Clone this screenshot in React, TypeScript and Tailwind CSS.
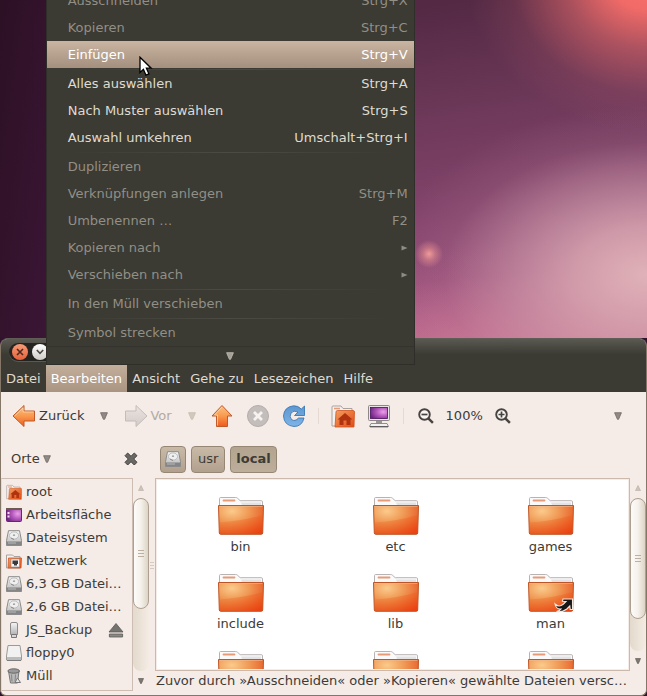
import type { ReactNode } from "react";

type MenuEntry =
  | { kind: "sep" }
  | { kind: "item"; label: string; keys?: string; disabled?: boolean; active?: boolean; submenu?: boolean };

const entries: MenuEntry[] = [
  { kind: "item", label: "Ausschneiden", keys: "Strg+X", disabled: true },
  { kind: "item", label: "Kopieren", keys: "Strg+C", disabled: true },
  { kind: "item", label: "Einfügen", keys: "Strg+V", active: true },
  { kind: "sep" },
  { kind: "item", label: "Alles auswählen", keys: "Strg+A" },
  { kind: "item", label: "Nach Muster auswählen", keys: "Strg+S" },
  { kind: "item", label: "Auswahl umkehren", keys: "Umschalt+Strg+I" },
  { kind: "sep" },
  { kind: "item", label: "Duplizieren", disabled: true },
  { kind: "item", label: "Verknüpfungen anlegen", keys: "Strg+M", disabled: true },
  { kind: "item", label: "Umbenennen …", keys: "F2", disabled: true },
  { kind: "item", label: "Kopieren nach", disabled: true, submenu: true },
  { kind: "item", label: "Verschieben nach", disabled: true, submenu: true },
  { kind: "sep" },
  { kind: "item", label: "In den Müll verschieben", disabled: true },
  { kind: "sep" },
  { kind: "item", label: "Symbol strecken", disabled: true },
];

function Gradients() {
  return (
    <svg width="0" height="0" className="absolute" aria-hidden="true">
      <defs>
        <linearGradient id="arrowOrange" x1="0" y1="0" x2="0" y2="1">
          <stop offset="0" stopColor="#fcc184" />
          <stop offset="0.5" stopColor="#f99a4e" />
          <stop offset="1" stopColor="#f0591c" />
        </linearGradient>
        <linearGradient id="arrowGrey" x1="0" y1="0" x2="0" y2="1">
          <stop offset="0" stopColor="#eae4e0" />
          <stop offset="1" stopColor="#d3cbc8" />
        </linearGradient>
        <linearGradient id="arrowBlue" x1="0" y1="0" x2="0" y2="1">
          <stop offset="0" stopColor="#5c97cf" />
          <stop offset="1" stopColor="#7fb4e6" />
        </linearGradient>
        <radialGradient id="folderFront" cx="0.3" cy="0.2" r="0.95">
          <stop offset="0" stopColor="#fbcb8c" />
          <stop offset="0.4" stopColor="#f09a56" />
          <stop offset="0.8" stopColor="#e8602a" />
          <stop offset="1" stopColor="#e6461a" />
        </radialGradient>
        <linearGradient id="folderLow" x1="0" y1="0" x2="1" y2="1">
          <stop offset="0" stopColor="#e9802f" stopOpacity="0.3" />
          <stop offset="1" stopColor="#f03c08" stopOpacity="0.5" />
        </linearGradient>
        <linearGradient id="smallFolder" x1="0" y1="0" x2="1" y2="1">
          <stop offset="0" stopColor="#f5a063" />
          <stop offset="1" stopColor="#e24a14" />
        </linearGradient>
        <radialGradient id="screenPurple" cx="0.75" cy="0.4" r="0.8">
          <stop offset="0" stopColor="#e9a0e6" />
          <stop offset="0.5" stopColor="#b457bc" />
          <stop offset="1" stopColor="#6f2583" />
        </radialGradient>
        <linearGradient id="metal" x1="0" y1="0" x2="0" y2="1">
          <stop offset="0" stopColor="#f6f6f6" />
          <stop offset="1" stopColor="#b4b4b4" />
        </linearGradient>
      </defs>
    </svg>
  );
}

function Down({ tone = "#6f6864", size = 8 }: { tone?: string; size?: number }) {
  return (
    <svg width={size} height={size} viewBox="0 0 8 8" aria-hidden="true" className="shrink-0">
      <path d="M.6.7h6.8L4.6 7.3H3.4z" fill={tone} stroke={tone} strokeWidth=".8" fillOpacity=".75" />
    </svg>
  );
}

function Folder({ link }: { link?: boolean }) {
  return (
    <svg width="48" height="40" viewBox="0 0 48 40" aria-hidden="true" className="shrink-0">
      <path d="M2.500 12V2.600q0-1.100 1.100-1.100h15q1.200 0 2 .8l2.600 2.400h21.200q1.100 0 1.100 1.100V12z" fill="#fbfafa" stroke="#b9b2b2" />
      <path d="M24 6.500h20V9H25z" fill="#e4e2e4" />
      <path d="M6.500 4.500h11" stroke="#e59b78" strokeWidth="1.800" strokeLinecap="round" />
      <path d="M1.500 9.500h45l-.8 27.500q-.1 1.300-1.300 1.300H3.600q-1.200 0-1.300-1.300z" fill="url(#folderFront)" stroke="#bd5526" />
      <path d="M2.300 26.500Q26 25 45.500 19v17.500q0 1.200-1.100 1.200H3.700q-1.100 0-1.100-1.200z" fill="url(#folderLow)" />
      <path d="M2.500 10.500h43" stroke="#f3b98c" strokeOpacity=".6" />
      {link && (
        <path d="M28 31q4 4 8.500 0l2.500-2.500-3.500-.2.500-2.300h9.500v10.500h-2.300l-.4-3.500-3 3q-4.500 3.500-10.300 2.500 3.500-.8 4.500-2.500-5 .5-6-5z" fill="#161616" stroke="#f3e9e2" strokeWidth="1.100" />
      )}
    </svg>
  );
}

function HomeFolder({ size }: { size: number }) {
  return (
    <svg width={size} height={size} viewBox="0 0 24 24" aria-hidden="true" className="shrink-0">
      <path d="M1 22V3q0-1 1-1h8l2 2.500h9V22z" fill="#f4f1f0" stroke="#aaa2a0" />
      <path d="M3 4.500h6" stroke="#e59b78" strokeWidth="1.500" />
      <path d="M5 8q0-1.500 1.500-1.500h15.500Q23.500 6.500 23.500 8l-.5 15H4z" fill="url(#smallFolder)" stroke="#d0541f" strokeWidth=".8" />
      <path d="M14 9l7.500 6.500h-2V21h-4v-4.500h-3V21h-4v-5.500h-2z" fill="#b0330f" />
    </svg>
  );
}

function Disk() {
  return (
    <svg width="16" height="16" viewBox="0 0 16 16" aria-hidden="true" className="shrink-0">
      <path d="M2.500.7h11l2 10v4.800H.5v-4.800z" fill="url(#metal)" stroke="#8b8b8b" />
      <ellipse cx="8" cy="5.500" rx="4.600" ry="3.600" fill="#efefef" stroke="#b3b3b3" strokeWidth=".8" />
      <ellipse cx="8" cy="5.200" rx="1.200" ry=".9" fill="#a5a5a5" />
      <path d="M8 9.500L5 8" stroke="#888" />
      <path d="M1 11.500h14V15H1z" fill="#858585" />
      <path d="M2 13h8" stroke="#b9b9b9" />
    </svg>
  );
}

function DesktopIcon() {
  return (
    <svg width="16" height="16" viewBox="0 0 16 16" aria-hidden="true" className="shrink-0">
      <rect x=".5" y="1.500" width="15" height="13" rx="1" fill="url(#screenPurple)" stroke="#6b2472" />
      <path d="M0 2h16" stroke="#6d5a50" strokeWidth="2" />
      <path d="M2.500 5v2M2.500 8.500v2" stroke="#f5d5f3" strokeWidth="2" />
    </svg>
  );
}

function NetworkFolder() {
  return (
    <svg width="16" height="16" viewBox="0 0 16 16" aria-hidden="true" className="shrink-0">
      <path d="M.5 15V2h6L8 3.500h6V15z" fill="#f4f1f0" stroke="#aaa2a0" />
      <path d="M2.500 5h13L15 15H2z" fill="url(#smallFolder)" stroke="#d0541f" strokeWidth=".8" />
      <path d="M5 6h8.500v8H5z" fill="#f4f4f4" stroke="#8a8a8a" strokeWidth=".6" />
      <path d="M6.500 7.500h5.500V11h-1v1.500H8V11H6.500z" fill="#3b3b3b" />
    </svg>
  );
}

function Usb() {
  return (
    <svg width="16" height="16" viewBox="0 0 16 16" aria-hidden="true" className="shrink-0">
      <path d="M4.500 2q0-1.500 1.500-1.500h4q1.500 0 1.500 1.500v10.500h-7z" fill="url(#metal)" stroke="#8b8b8b" />
      <path d="M5.500 12.500h5v3h-5z" fill="#d8d8d8" stroke="#777" />
    </svg>
  );
}

function Floppy() {
  return (
    <svg width="16" height="16" viewBox="0 0 16 16" aria-hidden="true" className="shrink-0">
      <path d="M2 .500h12l1.500 10.500v4H.5v-4z" fill="#f1f1f1" stroke="#9a9a9a" />
      <path d="M1 12h14v3H1z" fill="#bcbcbc" />
      <path d="M1 15.500h14" stroke="#7d7d7d" />
    </svg>
  );
}

function Trash() {
  return (
    <svg width="16" height="16" viewBox="0 0 16 16" aria-hidden="true" className="shrink-0">
      <path d="M2.500 3h10.500l-1.500 12H4.500z" fill="#b9b9b9" stroke="#777" />
      <ellipse cx="7.700" cy="3" rx="5.800" ry="2.200" fill="#9a9a9a" stroke="#666" />
      <path d="M5.500 6.500l.5 7M9.500 6.500l-.5 7" stroke="#858585" />
      <path d="M9 14.500l2.500-4.500 3 4.500z" fill="#e4e4e4" stroke="#777" />
    </svg>
  );
}

function Zoom({ plus }: { plus?: boolean }) {
  return (
    <svg width="16" height="16" viewBox="0 0 16 16" aria-hidden="true">
      <circle cx="6.500" cy="6.500" r="5.300" fill="#faf6f4" stroke="#464340" strokeWidth="1.900" />
      <path d="M10.300 10.300l4.600 4.600" stroke="#464340" strokeWidth="2.400" />
      <path d={plus ? "M3.500 6.500h6M6.500 3.500v6" : "M3.500 6.500h6"} stroke="#464340" strokeWidth="1.700" />
    </svg>
  );
}

function EditMenu() {
  return (
    <div role="menu" className="absolute bottom-full left-0 z-10 w-[369px] border border-t-0 border-[#2f2e29] bg-[#3b3a33]">
      {entries.map((e, i) =>
        e.kind === "sep" ? (
          <div key={i} role="separator" className="mx-5 h-0.5 pt-px">
            <div className="h-px bg-gradient-to-r from-transparent via-[#4b4a43] to-transparent" />
          </div>
        ) : (
          <button
            key={i}
            role="menuitem"
            disabled={e.disabled}
            className={
              "relative flex h-[27px] w-full items-center justify-between pr-1.5 pl-[21px] " +
              (e.active
                ? "bg-gradient-to-b from-[#c9b5a2] to-[#a58f7e] text-white"
                : e.disabled
                  ? "text-[#918f86]"
                  : "text-[#dfdbd2]")
            }
          >
            <span>{e.label}</span>
            {e.keys && <span>{e.keys}</span>}
            {e.submenu && (
              <svg width="7" height="6" viewBox="0 0 7 6" aria-hidden="true">
                <path d="M.5.500L6.500 3l-6 2.500z" fill="#8d8b83" />
              </svg>
            )}
            {e.active && (
              <svg width="14" height="22" viewBox="0 0 14 22" className="absolute top-[15px] left-[92px] z-20" aria-hidden="true">
                <path d="M1 1.200v15.300l3.400-3.200 2.500 5.800 3-1.300-2.500-5.600h4.800z" fill="#fff" stroke="#000" strokeWidth="1.300" />
              </svg>
            )}
          </button>
        ),
      )}
      <div className="flex h-[18px] items-center justify-center border-t border-[#34332e]">
        <Down tone="#c4c1b8" />
      </div>
    </div>
  );
}

function ToolButton({ label, children, disabled, className }: { label: string; children: ReactNode; disabled?: boolean; className: string }) {
  return (
    <button aria-label={label} disabled={disabled} className={"flex h-6 shrink-0 items-center justify-center " + className}>
      {children}
    </button>
  );
}

function Toolbar() {
  return (
    <div className="flex h-12 shrink-0 items-center">
      <button className="ml-[11px] flex shrink-0 items-center gap-[3px]">
        <svg width="24" height="24" viewBox="0 0 24 24" aria-hidden="true">
          <path d="M1 12L12 1.500V7h10.500v10H12v5.500z" fill="url(#arrowOrange)" stroke="#c05a28" />
          <path d="M2.800 12L11 4v4h10.500" fill="none" stroke="#ffdcae" strokeOpacity=".7" />
        </svg>
        Zurück
      </button>
      <ToolButton label="Zurück-Verlauf" className="ml-2.5 w-5"><Down /></ToolButton>
      <button disabled className="ml-2.5 flex shrink-0 items-center gap-0.5 text-[#b3aa9f]">
        <svg width="24" height="24" viewBox="0 0 24 24" aria-hidden="true">
          <path d="M23 12L12 1.500V7H1.500v10H12v5.500z" fill="url(#arrowGrey)" stroke="#c3bcb8" />
        </svg>
        Vor
      </button>
      <ToolButton label="Vor-Verlauf" disabled className="ml-2.5 w-5"><Down tone="#c5bcae" /></ToolButton>
      <ToolButton label="Übergeordneter Ordner" className="ml-2 w-6">
        <svg width="24" height="24" viewBox="0 0 24 24" aria-hidden="true">
          <path d="M12 1.500L22 12h-4.500v10.500h-11V12H2z" fill="url(#arrowOrange)" stroke="#c05a28" />
          <path d="M12 3L4.500 11h3v10.500" fill="none" stroke="#ffdcae" strokeOpacity=".7" />
        </svg>
      </ToolButton>
      <ToolButton label="Abbrechen" disabled className="ml-3 w-6">
        <svg width="24" height="24" viewBox="0 0 24 24" aria-hidden="true">
          <circle cx="12" cy="12" r="10.500" fill="#c3bdbb" stroke="#b4adab" />
          <path d="M8 8l8 8M16 8l-8 8" stroke="#f7f3f1" strokeWidth="2.800" />
        </svg>
      </ToolButton>
      <ToolButton label="Neu laden" className="ml-3 w-6">
        <svg width="24" height="24" viewBox="0 0 24 24" aria-hidden="true">
          <path d="M22.500 2v9.500H12.500l3.500-3.500Q11.500 5.800 9 9q-2 4 .5 6.500 3.500 2.500 7-1.500h5.500Q20 22.500 12 22.500 2 21.500 1.500 12 2 3 11.500 1.800q4.500-.3 7.800 3.300z" fill="url(#arrowBlue)" stroke="#3d78b5" strokeWidth=".9" />
        </svg>
      </ToolButton>
      <div className="ml-3 h-4 w-px shrink-0 bg-[#e4d9d3]" />
      <ToolButton label="Persönlicher Ordner" className="ml-3 w-6"><HomeFolder size={24} /></ToolButton>
      <ToolButton label="Rechner" className="ml-3 w-6">
        <svg width="24" height="24" viewBox="0 0 24 24" aria-hidden="true">
          <rect x="1.500" y="1.500" width="21" height="15" rx="1" fill="#e7e4e4" stroke="#8d8787" />
          <rect x="3.500" y="3.500" width="17" height="11" fill="url(#screenPurple)" stroke="#46105a" strokeWidth=".8" />
          <path d="M9 17h6v2.500H9z" fill="#9a9696" />
          <path d="M4 19.500h16l1.500 3h-19z" fill="#f2f0f0" stroke="#777" strokeWidth=".8" />
          <path d="M3 22.800h18" stroke="#4c4848" />
        </svg>
      </ToolButton>
      <div className="ml-3 h-4 w-px shrink-0 bg-[#e4d9d3]" />
      <ToolButton label="Verkleinern" className="ml-2.5 w-6"><Zoom /></ToolButton>
      <button className="ml-2 shrink-0">100%</button>
      <ToolButton label="Vergrößern" className="ml-2 w-6"><Zoom plus /></ToolButton>
      <ToolButton label="Weitere Werkzeuge" className="mr-[18px] ml-auto w-5"><Down /></ToolButton>
    </div>
  );
}

function Scrollbar({ thumb }: { thumb: string }) {
  return (
    <div className="flex w-4 shrink-0 flex-col">
      <div className="flex h-5 shrink-0 items-center justify-center">
        <svg width="6" height="6" viewBox="0 0 6 6" aria-hidden="true"><path d="M3 .500L5.500 5.500h-5z" fill="#cdc3b8" stroke="#b8aea4" strokeWidth=".6" /></svg>
      </div>
      <div className="flex-1 rounded-full bg-gradient-to-r from-[#e3d9cc] to-[#f4ece4]">
        <div className={"flex flex-col items-center justify-center gap-0.5 rounded-full border border-[#aea090] bg-gradient-to-r from-[#fdfcfa] via-[#f5f0ea] to-[#ddd4c5] " + thumb}>
          <div className="h-px w-1.5 bg-[#bbb0a2]" />
          <div className="h-px w-1.5 bg-[#bbb0a2]" />
          <div className="h-px w-1.5 bg-[#bbb0a2]" />
        </div>
      </div>
      <div className="flex h-5 shrink-0 items-center justify-center">
        <Down size={6} tone="#57514b" />
      </div>
    </div>
  );
}

const places: { name: string; icon: ReactNode; eject?: boolean }[] = [
  { name: "root", icon: <HomeFolder size={16} /> },
  { name: "Arbeitsfläche", icon: <DesktopIcon /> },
  { name: "Dateisystem", icon: <Disk /> },
  { name: "Netzwerk", icon: <NetworkFolder /> },
  { name: "6,3 GB Datei…", icon: <Disk /> },
  { name: "2,6 GB Datei…", icon: <Disk /> },
  { name: "JS_Backup", icon: <Usb />, eject: true },
  { name: "floppy0", icon: <Floppy /> },
  { name: "Müll", icon: <Trash /> },
];

function Sidebar() {
  return (
    <aside className="flex w-[148px] shrink-0 flex-col">
      <div className="flex h-[38px] shrink-0 items-center justify-between pr-[11px] pl-2.5">
        <button className="flex items-center gap-[3px]">Orte <Down /></button>
        <button aria-label="Seitenleiste schließen">
          <svg width="14" height="14" viewBox="0 0 14 14" aria-hidden="true">
            <path d="M3.700 1L7 4.300 10.300 1 13 3.700 9.700 7l3.300 3.300-2.700 2.700L7 9.700 3.700 13 1 10.300 4.300 7 1 3.700z" fill="#6a6865" stroke="#44423f" />
          </svg>
        </button>
      </div>
      <div className="flex min-h-0 flex-1">
        <ul className="min-w-0 flex-1 border border-[#cdbdb2] border-l-[#e5d9d2] py-px">
          {places.map((p) => (
            <li key={p.name} className="flex h-[23px] items-center pr-2 pl-1">
              <button className="flex items-center gap-1 whitespace-nowrap">
                {p.icon}
                {p.name}
              </button>
              {p.eject && (
                <button aria-label="Auswerfen" className="ml-auto">
                  <svg width="16" height="16" viewBox="0 0 16 16" aria-hidden="true">
                    <path d="M8 1.500L15 10H1z" fill="#75736f" stroke="#5b5956" strokeWidth=".8" />
                    <path d="M1.400 12h13.200v3H1.400z" fill="#8a8884" stroke="#5b5956" strokeWidth=".8" />
                  </svg>
                </button>
              )}
            </li>
          ))}
        </ul>
        <Scrollbar thumb="h-[64%]" />
      </div>
    </aside>
  );
}

const pathButton = "flex h-[27px] items-center justify-center rounded border border-[#968775] text-[#3c3b37]";

function Main() {
  const folders = ["bin", "etc", "games", "include", "lib", "man", "", "", ""];
  return (
    <main className="flex min-w-0 flex-1 flex-col">
      <nav className="flex h-[38px] shrink-0 items-center gap-[5px] pl-[5px]" aria-label="Pfad">
        <button aria-label="Dateisystem" className={"w-[26px] bg-gradient-to-b from-[#c9baa8] to-[#b1a08d] " + pathButton}>
          <Disk />
        </button>
        <button className={"bg-gradient-to-b from-[#c9baa8] to-[#b1a08d] px-1.5 " + pathButton}>usr</button>
        <button className={"bg-gradient-to-b from-[#b3a48f] to-[#bcae9b] px-[5px] font-bold " + pathButton}>local</button>
      </nav>
      <div className="flex min-h-0 flex-1">
        <div className="min-w-0 flex-1 overflow-hidden border border-[#cdb9ac] p-px">
          <div className="grid h-full grid-cols-3 content-start gap-y-[10px] overflow-hidden bg-white pt-4 pl-1.5">
            {folders.map((f, i) => (
              <button key={i} className="flex h-[67px] flex-col items-center">
                <Folder link={f === "man"} />
                {f && <span className="mt-0.5 leading-[18px]">{f}</span>}
              </button>
            ))}
          </div>
        </div>
        <Scrollbar thumb="h-[79%]" />
      </div>
      <div className="h-5 shrink-0 overflow-hidden pl-px leading-5 whitespace-nowrap">
        Zuvor durch »Ausschneiden« oder »Kopieren« gewählte Dateien versc…
      </div>
    </main>
  );
}

export default function App() {
  return (
    <div className="relative flex h-screen flex-col overflow-hidden bg-[#2f122b] font-['DejaVu_Sans',sans-serif] text-[13px] leading-4 text-[#3c3b37]">
      <Gradients />
      <div
        className="h-[338px] shrink-0 bg-[radial-gradient(circle_at_429px_254px,#f09a98_0,#e8909088_6px,transparent_14px),radial-gradient(ellipse_180px_150px_at_100%_-20px,#ff7069_0,#fb6f6aee_20%,#e0686a99_45%,#c060682b_75%,transparent_100%),radial-gradient(ellipse_260px_170px_at_100%_275px,#e0b2b8_0,#d8a5b0dd_28%,#cc98a899_52%,#b880982b_78%,transparent_100%),radial-gradient(ellipse_420px_130px_at_560px_370px,#d8809c_0,#cf7895aa_40%,#c068882b_75%,transparent_100%),linear-gradient(172deg,#552944_0,#532944_15%,#6e395a_42%,#84446c_65%,#9f5280_88%,#a85a85_100%)]"
      >
        <div className="h-full w-12 bg-gradient-to-br from-[#2c1024] to-[#3b1636]" />
      </div>
      <div className="flex min-h-0 flex-1 flex-col rounded-t-lg rounded-b-md border border-[#857767] border-t-[#5f5e56] bg-[#f5ebe7]">
        <header className="relative flex h-[26px] shrink-0 items-center rounded-t-md bg-gradient-to-b from-[#5a5a51] to-[#3b3a33] to-60%">
          <div className="ml-2 flex h-[18px] items-center gap-1 rounded-full bg-[#24231f] px-[3px] shadow-[0_1px_0_#5b5a52]">
            <button aria-label="Schließen" className="flex size-4 items-center justify-center rounded-full bg-gradient-to-b from-[#f79b76] to-[#e5603a]">
              <svg width="8" height="8" viewBox="0 0 8 8" aria-hidden="true"><path d="M1 1l6 6M7 1L1 7" stroke="#4b2a1e" strokeWidth="1.600" /></svg>
            </button>
            <button aria-label="Minimieren" className="flex size-4 items-center justify-center rounded-full bg-gradient-to-b from-white to-[#cfccc7]">
              <svg width="8" height="6" viewBox="0 0 8 6" aria-hidden="true"><path d="M.8 1L4 4.300 7.200 1" fill="none" stroke="#4a4945" strokeWidth="1.600" /></svg>
            </button>
            <button aria-label="Maximieren" className="size-4 rounded-full bg-[#dedbd6]" />
          </div>
        </header>
        <div role="menubar" className="flex h-[27px] shrink-0 bg-[#3b3a33] text-[#dfdbd2]">
          <button role="menuitem" className="px-[5px]">Datei</button>
          <div className="relative flex">
            <button role="menuitem" aria-haspopup="menu" aria-expanded="true" className="bg-gradient-to-b from-[#c2ae9b] to-[#aa9482] px-[5px] text-white">
              Bearbeiten
            </button>
            <EditMenu />
          </div>
          <button role="menuitem" className="px-[5px]">Ansicht</button>
          <button role="menuitem" className="px-[5px]">Gehe zu</button>
          <button role="menuitem" className="px-[5px]">Lesezeichen</button>
          <button role="menuitem" className="px-[5px]">Hilfe</button>
        </div>
        <Toolbar />
        <div className="flex min-h-0 flex-1 pb-1">
          <Sidebar />
          <div className="flex w-1.5 shrink-0 flex-col items-center justify-center gap-0.5">
            <div className="h-px w-1 bg-[#d8cac0]" />
            <div className="h-px w-1 bg-[#d8cac0]" />
            <div className="h-px w-1 bg-[#d8cac0]" />
          </div>
          <Main />
        </div>
      </div>
    </div>
  );
}
